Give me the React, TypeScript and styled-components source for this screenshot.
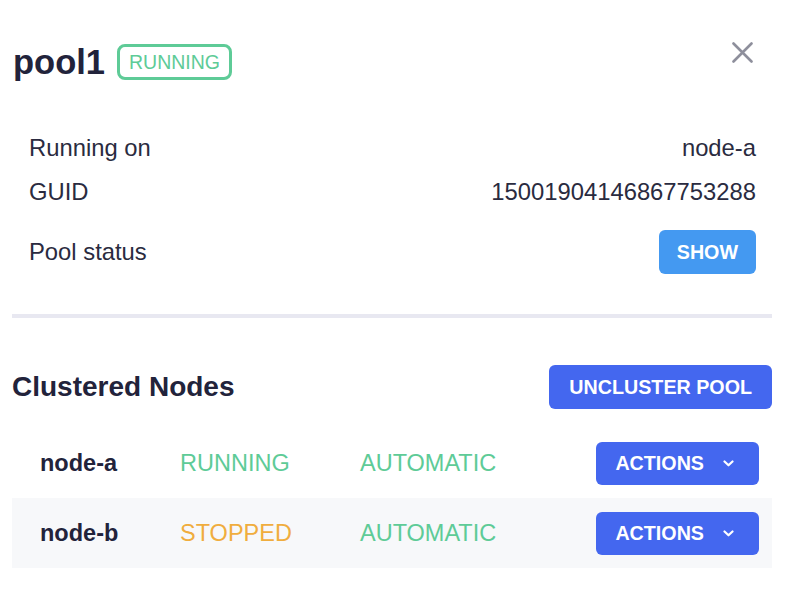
import React from 'react';
import styled, { createGlobalStyle } from 'styled-components';

const GlobalStyle = createGlobalStyle`
  body {
    margin: 0;
    background: #ffffff;
    font-family: "Liberation Sans", Arial, sans-serif;
    color: #23243b;
  }
`;

type NodeStatus = 'RUNNING' | 'STOPPED';

interface ClusterNode {
  name: string;
  status: NodeStatus;
  mode: string;
}

const nodes: ClusterNode[] = [
  { name: 'node-a', status: 'RUNNING', mode: 'AUTOMATIC' },
  { name: 'node-b', status: 'STOPPED', mode: 'AUTOMATIC' },
];

const App: React.FC = () => {
  return (
    <>
      <GlobalStyle />
      <Panel>
        <Header>
          <Title>pool1</Title>
          <StatusBadge>RUNNING</StatusBadge>
          <CloseButton aria-label="Close">
            <svg width="21" height="21" viewBox="0 0 21 21">
              <path d="M1.5 1.5 L19.5 19.5 M19.5 1.5 L1.5 19.5" stroke="#8e8f9c" strokeWidth="2.6" strokeLinecap="round" />
            </svg>
          </CloseButton>
        </Header>

        <InfoList>
          <InfoRow>
            <span>Running on</span>
            <span>node-a</span>
          </InfoRow>
          <InfoRow>
            <span>GUID</span>
            <span>15001904146867753288</span>
          </InfoRow>
          <InfoRow spaced>
            <span>Pool status</span>
            <ShowButton>SHOW</ShowButton>
          </InfoRow>
        </InfoList>

        <Divider />

        <SectionHeader>
          <SectionTitle>Clustered Nodes</SectionTitle>
          <PrimaryButton>UNCLUSTER POOL</PrimaryButton>
        </SectionHeader>

        <NodeTable>
          {nodes.map((node, i) => (
            <NodeRow key={node.name} striped={i % 2 === 1}>
              <NodeName>{node.name}</NodeName>
              <StateText tone={node.status === 'RUNNING' ? 'green' : 'orange'}>{node.status}</StateText>
              <StateText tone="green">{node.mode}</StateText>
              <ActionsButton>
                ACTIONS
                <svg width="11" height="7" viewBox="0 0 11 7">
                  <path d="M1.5 1.5 L5.5 5.3 L9.5 1.5" stroke="#ffffff" strokeWidth="2.2" fill="none" strokeLinecap="round" strokeLinejoin="round" />
                </svg>
              </ActionsButton>
            </NodeRow>
          ))}
        </NodeTable>
      </Panel>
    </>
  );
};

const Panel = styled.div`
  padding: 44px 20px 40px 12px;
`;

const Header = styled.div`
  display: flex;
  align-items: center;
  height: 36px;
`;

const Title = styled.h1`
  margin: 0 0 0 1px;
  font-size: 34.5px;
  font-weight: bold;
  color: #22233b;
  line-height: 38px;
`;

const StatusBadge = styled.span`
  box-sizing: border-box;
  display: inline-flex;
  align-items: center;
  height: 36px;
  margin-left: 12px;
  padding: 0 9px;
  border: 3px solid #5ecb97;
  border-radius: 8px;
  color: #5ecb97;
  font-size: 19.5px;
`;

const CloseButton = styled.button`
  display: flex;
  align-items: center;
  justify-content: center;
  width: 32px;
  height: 32px;
  margin: -8px 14px 0 auto;
  align-self: flex-start;
  padding: 0;
  border: none;
  background: none;
  cursor: pointer;
`;

const InfoList = styled.div`
  margin-top: 46px;
  padding: 0 16px 0 17px;
`;

interface InfoRowProps {
  spaced?: boolean;
}

const InfoRow = styled.div<InfoRowProps>`
  display: flex;
  align-items: center;
  justify-content: space-between;
  height: 44px;
  margin-top: ${(p: InfoRowProps) => (p.spaced ? '16px' : '0')};
  font-size: 23.8px;
  color: #2a2b40;
`;

const BaseButton = styled.button`
  box-sizing: border-box;
  height: 44px;
  border: none;
  border-radius: 6px;
  color: #ffffff;
  font-family: "Liberation Sans", Arial, sans-serif;
  font-weight: bold;
  font-size: 19.7px;
  cursor: pointer;
`;

const ShowButton = styled(BaseButton)`
  padding: 0 18px;
  background: #4499f1;
`;

const Divider = styled.hr`
  margin: 40px 0 0;
  height: 4px;
  border: none;
  background: #e8e8f1;
`;

const SectionHeader = styled.div`
  display: flex;
  align-items: center;
  justify-content: space-between;
  margin-top: 47px;
`;

const SectionTitle = styled.h2`
  margin: 0;
  font-size: 28px;
  font-weight: bold;
  color: #22233b;
`;

const PrimaryButton = styled(BaseButton)`
  padding: 0 20px;
  background: #4467ef;
`;

const NodeTable = styled.div`
  margin-top: 19px;
`;

interface NodeRowProps {
  striped: boolean;
}

const NodeRow = styled.div<NodeRowProps>`
  display: grid;
  grid-template-columns: 140px 180px 1fr auto;
  align-items: center;
  height: 70px;
  padding: 0 13px 0 28px;
  background: ${(p: NodeRowProps) => (p.striped ? '#f7f8fa' : '#ffffff')};
  font-size: 23.5px;
`;

const NodeName = styled.span`
  font-weight: bold;
  color: #22233b;
`;

interface StateTextProps {
  tone: 'green' | 'orange';
}

const StateText = styled.span<StateTextProps>`
  color: ${(p: StateTextProps) => (p.tone === 'green' ? '#5ecb97' : '#f0ad3e')};
`;

const ActionsButton = styled(BaseButton)`
  display: flex;
  align-items: center;
  gap: 19px;
  height: 43px;
  padding: 0 25px 0 19px;
  background: #4467ef;

  svg {
    margin-top: 1px;
  }
`;

export default App;
